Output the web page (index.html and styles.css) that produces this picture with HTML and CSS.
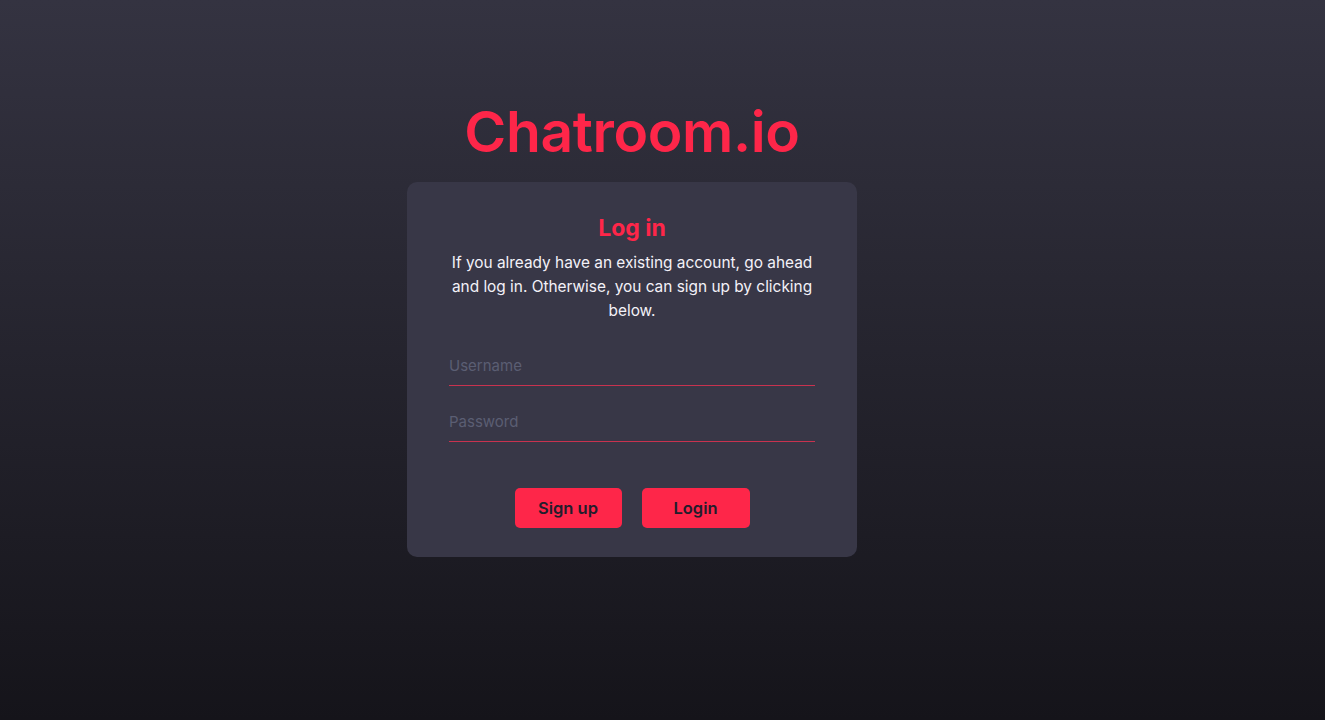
FILE: index.html
```html
<!DOCTYPE html>
<html lang="en">
<head>
<meta charset="utf-8">
<title>Chatroom.io</title>
<link rel="stylesheet" href="styles.css">
</head>
<body>
<main class="page">
  <h1 class="brand">Chatroom.io</h1>
  <section class="card">
    <h2 class="card-title">Log in</h2>
    <p class="card-text">If you already have an existing account, go ahead and log in. Otherwise, you can sign up by clicking below.</p>
    <form class="form">
      <input class="field" type="text" placeholder="Username">
      <input class="field" type="password" placeholder="Password">
      <div class="actions">
        <button type="button" class="btn btn-signup">Sign up</button>
        <button type="button" class="btn btn-login">Login</button>
      </div>
    </form>
  </section>
</main>
</body>
</html>
```
FILE: styles.css
```css
* { box-sizing: border-box; }
html, body { margin: 0; height: 100%; }
body {
  background: linear-gradient(180deg, #343341 0%, #15141a 100%);
  font-family: "Inter", "Lato", sans-serif;
  color: #f2f0f6;
}
.page {
  display: flex;
  flex-direction: column;
  align-items: center;
  padding-top: 96px;
  padding-right: 61px;
}
.brand {
  margin: 0;
  color: #fe2649;
  font-size: 57px;
  font-weight: 600;
  line-height: 72px;
  letter-spacing: -0.4px;
}
.card {
  margin-top: 14px;
  width: 450px;
  background: #383747;
  border-radius: 10px;
  padding: 30px 42px 29px;
  display: flex;
  flex-direction: column;
  align-items: center;
}
.card-title {
  margin: 0;
  color: #fe2649;
  font-size: 23px;
  font-weight: 700;
  line-height: 32px;
}
.card-text {
  margin: 7px -4px 0;
  text-align: center;
  font-size: 15.4px;
  line-height: 24px;
  color: #f3f1f8;
}
.form {
  width: 100%;
  display: flex;
  flex-direction: column;
  margin-top: 26px;
}
.field {
  width: 100%;
  background: transparent;
  border: none;
  border-bottom: 1px solid #c8324f;
  color: #f2f0f6;
  font-family: inherit;
  font-size: 15px;
  padding: 7px 0 10px;
  outline: none;
}
.field + .field { margin-top: 19px; }
.field::placeholder { color: #5b5e73; }
.actions {
  display: flex;
  justify-content: center;
  gap: 20px;
  margin-top: 46px;
}
.btn {
  height: 40px;
  border: none;
  border-radius: 5px;
  background: #fe2649;
  color: #221d2c;
  font-family: inherit;
  font-size: 16.5px;
  font-weight: 600;
}
.btn-signup { width: 107px; }
.btn-login { width: 108px; }
```
